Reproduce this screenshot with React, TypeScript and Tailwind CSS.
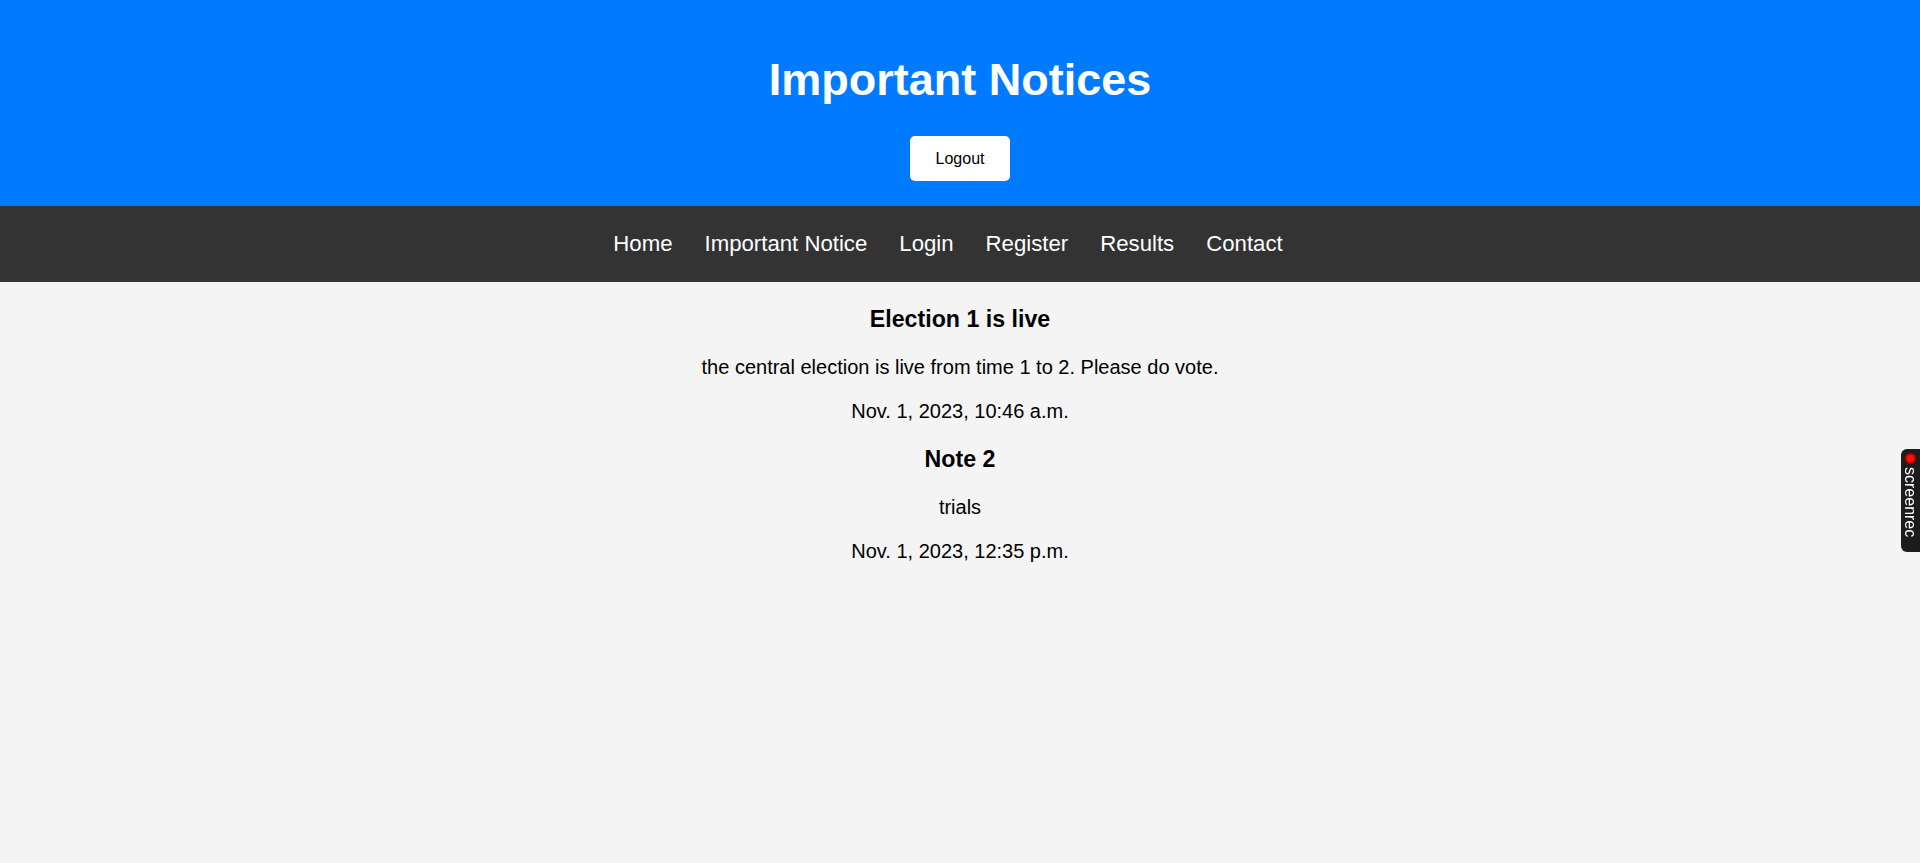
import React from 'react';

const links = ['Home', 'Important Notice', 'Login', 'Register', 'Results', 'Contact'];

const notices = [
  {
    title: 'Election 1 is live',
    body: 'the central election is live from time 1 to 2. Please do vote.',
    date: 'Nov. 1, 2023, 10:46 a.m.',
  },
  {
    title: 'Note 2',
    body: 'trials',
    date: 'Nov. 1, 2023, 12:35 p.m.',
  },
];

const App: React.FC = () => {
  return (
    <div className="min-h-screen bg-[#f4f4f4] font-['Liberation_Sans',Arial,sans-serif] text-black">
      {/* Header */}
      <header className="bg-[#007bff] flex flex-col items-center pt-[54px] pb-[25px]">
        <h1 className="text-white font-bold text-[45px] leading-[52px]">Important Notices</h1>
        <button className="mt-[30px] w-[100px] h-[45px] bg-white rounded-[5px] text-[16px] text-black">
          Logout
        </button>
      </header>

      {/* Navigation */}
      <nav className="bg-[#333333] h-[76px] flex items-center justify-center gap-[32px] pr-[24px]">
        {links.map((link) => (
          <a key={link} href="#" className="text-white text-[22.2px] leading-[76px]">
            {link}
          </a>
        ))}
      </nav>

      {/* Notices */}
      <main className="pt-[24px] text-center">
        {notices.map((n, i) => (
          <div key={n.title} className={i > 0 ? 'mt-[23px]' : ''}>
            <h3 className="font-bold text-[23.2px] leading-[27px] mb-[22px]">{n.title}</h3>
            <p className="text-[20px] leading-[24px]">{n.body}</p>
            <p className="text-[20px] leading-[24px] mt-[20px]">{n.date}</p>
          </div>
        ))}
      </main>

      {/* screenrec widget */}
      <div className="fixed right-0 top-[449px] w-[19px] h-[103px] bg-[#1c1c1c] rounded-l-[6px] flex flex-col items-center pt-[4px]">
        <span className="w-[11px] h-[11px] rounded-full bg-[#ff1010] border-2 border-[#c40000]" />
        <span className="mt-[3px] text-white text-[16px] leading-[17px] [writing-mode:vertical-rl]">
          screenrec
        </span>
      </div>
    </div>
  );
};

export default App;
